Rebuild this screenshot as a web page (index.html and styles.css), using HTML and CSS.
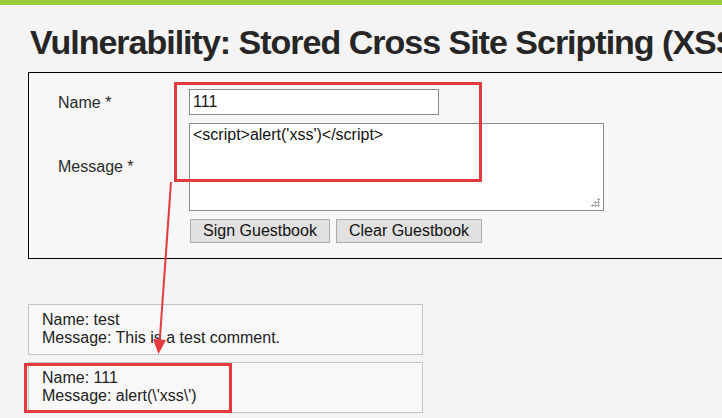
FILE: index.html
```html
<!DOCTYPE html>
<html>
<head>
<meta charset="utf-8">
<link rel="stylesheet" href="styles.css">
</head>
<body>
<div class="topbar"></div>
<div class="page">
  <h1 class="title">Vulnerability: Stored Cross Site Scripting (XSS)</h1>
  <div class="form-box">
    <div class="form-grid">
      <div class="label label-name">Name *</div>
      <div class="field"><div class="input">111</div></div>
      <div class="label label-msg">Message *</div>
      <div class="field"><div class="textarea">&lt;script&gt;alert('xss')&lt;/script&gt;<span class="grip"></span></div></div>
      <div></div>
      <div class="buttons">
        <span class="btn btn-sign">Sign Guestbook</span>
        <span class="btn btn-clear">Clear Guestbook</span>
      </div>
    </div>
  </div>
  <div class="comments">
    <div class="comment">Name: test<br>Message: This is a test comment.</div>
    <div class="comment">Name: 111<br>Message: alert(\'xss\')</div>
  </div>
</div>
<div class="mark mark-form"></div>
<div class="mark mark-comment"></div>
<svg class="arrow" width="40" height="200" viewBox="0 0 40 200">
  <line x1="25" y1="0" x2="13.5" y2="162" stroke="#e23b3f" stroke-width="2"/>
  <polygon points="7,157 20,158 12.5,172" fill="#e23b3f"/>
</svg>
</body>
</html>
```
FILE: styles.css
```css
html, body {
  margin: 0;
  padding: 0;
}
body {
  background: #f4f4f4;
  font-family: "Liberation Sans", Arial, sans-serif;
  color: #222;
  width: 722px;
  height: 418px;
  overflow: hidden;
  position: relative;
}
.topbar {
  height: 5px;
  background: #9ccb3b;
}
.page {
  padding-left: 28px;
}
.title {
  margin: 0;
  padding: 17px 0 0 2px;
  height: 48px;
  box-sizing: border-box;
  font-size: 34px;
  line-height: 40px;
  font-weight: bold;
  color: #262626;
  white-space: nowrap;
  letter-spacing: -1px;
}
.form-box {
  margin-top: 19px;
  width: 720px;
  height: 187px;
  border: 1px solid #000;
  box-sizing: border-box;
  background: #f7f7f7;
}
.form-grid {
  display: grid;
  grid-template-columns: 131px auto;
  padding: 16px 0 0 29px;
  row-gap: 0;
}
.label {
  font-size: 16px;
  color: #2a2a2a;
}
.label-name {
  padding-top: 5px;
}
.label-msg {
  padding-top: 43px;
}
.input {
  width: 250px;
  height: 26px;
  box-sizing: border-box;
  border: 1px solid #8a8a8a;
  background: #fff;
  font-size: 16px;
  padding: 3px 0 0 3px;
  color: #111;
}
.textarea {
  position: relative;
  margin-top: 8px;
  width: 415px;
  height: 88px;
  box-sizing: border-box;
  border: 1px solid #8a8a8a;
  background: #fff;
  font-size: 16px;
  padding: 2px 0 0 3px;
  color: #111;
}
.grip {
  position: absolute;
  right: 3px;
  bottom: 3px;
  width: 9px;
  height: 9px;
  background:
    radial-gradient(circle, #aaa 1.2px, transparent 1.4px) 6px 0 / 3px 3px no-repeat,
    radial-gradient(circle, #aaa 1.2px, transparent 1.4px) 3px 3px / 3px 3px no-repeat,
    radial-gradient(circle, #aaa 1.2px, transparent 1.4px) 6px 3px / 3px 3px no-repeat,
    radial-gradient(circle, #aaa 1.2px, transparent 1.4px) 0 6px / 3px 3px no-repeat,
    radial-gradient(circle, #aaa 1.2px, transparent 1.4px) 3px 6px / 3px 3px no-repeat,
    radial-gradient(circle, #aaa 1.2px, transparent 1.4px) 6px 6px / 3px 3px no-repeat;
}
.buttons {
  display: flex;
  gap: 6px;
  margin-top: 8px;
  padding-left: 1px;
}
.btn {
  display: inline-block;
  height: 24px;
  box-sizing: border-box;
  border: 1px solid #adadad;
  background: #e1e1e1;
  font-size: 16px;
  line-height: 22px;
  text-align: center;
  color: #111;
}
.btn-sign { width: 140px; }
.btn-clear { width: 146px; }
.comments {
  margin-top: 45px;
  display: flex;
  flex-direction: column;
  gap: 7px;
}
.comment {
  width: 395px;
  height: 51px;
  box-sizing: border-box;
  border: 1px solid #c4c4c4;
  background: #f8f8f8;
  padding: 6px 0 0 13px;
  font-size: 16px;
  line-height: 18px;
  color: #222;
}
.mark {
  position: absolute;
  border: 3px solid #e23b3f;
  box-sizing: border-box;
}
.mark-form {
  left: 174px;
  top: 82px;
  width: 308px;
  height: 100px;
}
.mark-comment {
  left: 24px;
  top: 363px;
  width: 208px;
  height: 50px;
}
.arrow {
  position: absolute;
  left: 146px;
  top: 182px;
}
```
